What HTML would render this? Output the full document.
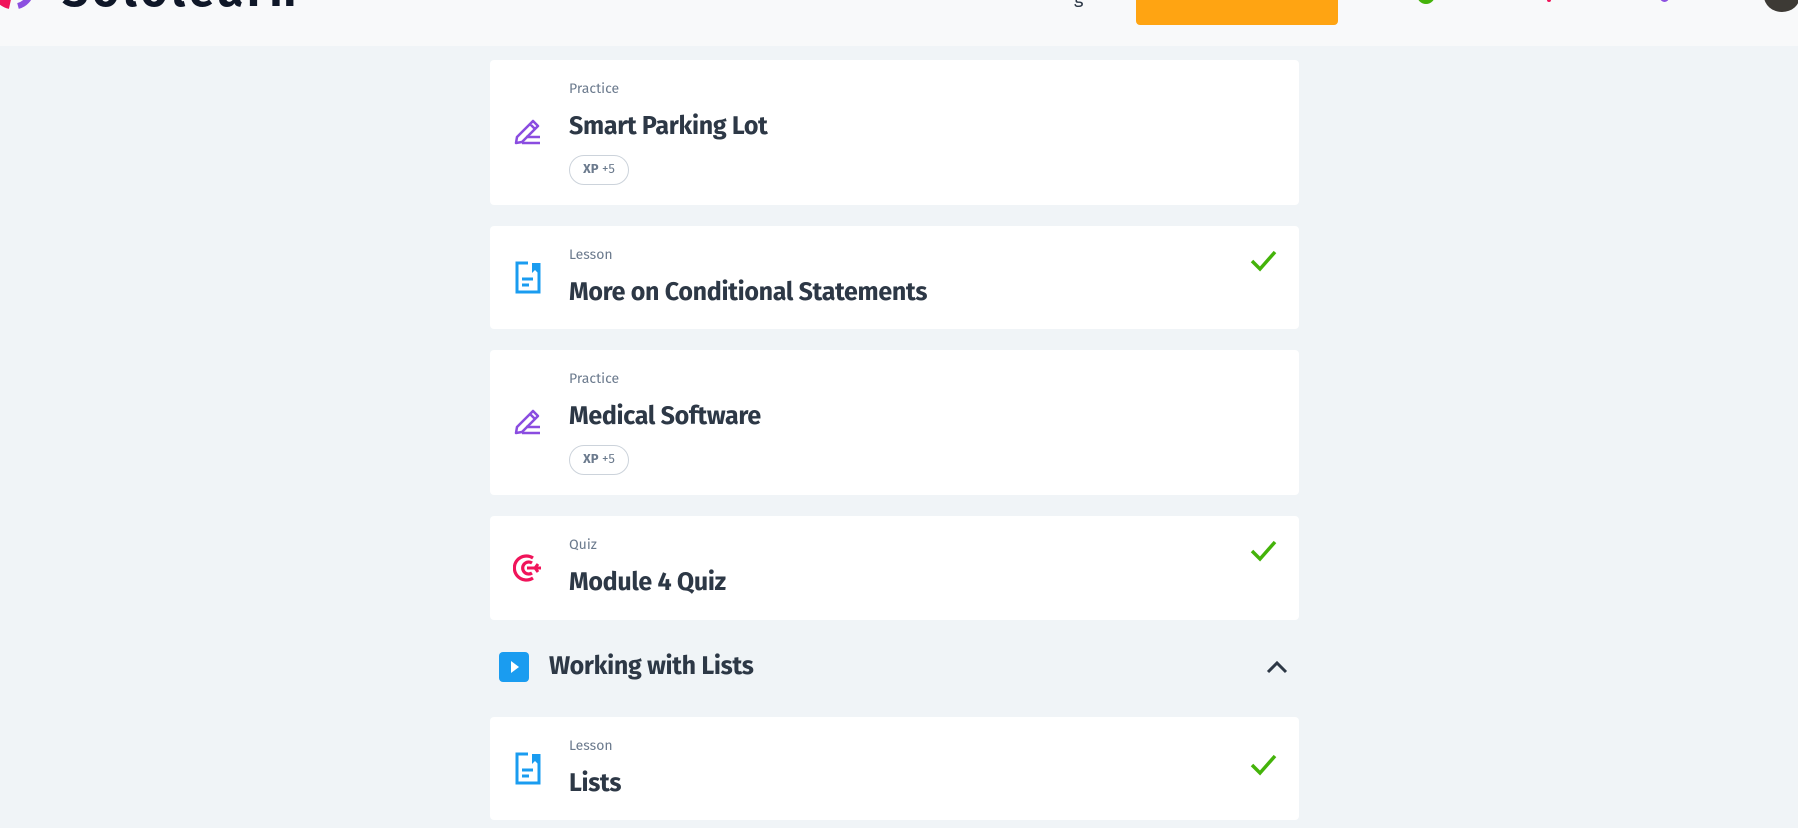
<!DOCTYPE html>
<html><head><meta charset="utf-8"><style>
*{margin:0;padding:0;box-sizing:border-box}
body{width:1798px;height:828px;overflow:hidden;background:#f0f4f7;font-family:"Fira Sans","Liberation Sans",sans-serif;position:relative}
.hdr{position:absolute;left:0;top:0;width:1798px;height:46px;background:#f8f9fa}
.card{position:absolute;left:490px;width:809px;background:#fff;border-radius:4px}
.lbl{position:absolute;left:79px;font-size:14px;color:#6b7a8d}
.ttl{position:absolute;left:79px;font-size:25px;font-weight:bold;color:#2d3846;letter-spacing:-0.3px}
.xp{position:absolute;left:79px;width:60px;height:30px;border:1px solid #ccd3db;border-radius:15px;font-size:13px;color:#6b7a8d;line-height:28px;text-align:center}
.ic{position:absolute;left:23px}
.chk{position:absolute;left:760px}
</style></head><body>
<div class="hdr">
 <svg style="position:absolute;left:-10px;top:-30px" width="60" height="40"><path d="M8 8 A18 18 0 0 0 20 34" stroke="#f0145a" stroke-width="10" fill="none"/><path d="M34 4 A18 18 0 0 1 28 36" stroke="#8c50e0" stroke-width="6" fill="none"/></svg>
 <div style="position:absolute;left:62px;top:-36px;font-size:46px;font-weight:bold;color:#0f1728;letter-spacing:4px">Sololearn</div>
 <div style="position:absolute;left:1074px;top:-14px;font-size:18px;color:#2d3846">g</div>
 <div style="position:absolute;left:1136px;top:-10px;width:202px;height:35px;background:#ffa412;border-radius:4px"></div>
 <div style="position:absolute;left:1417px;top:-8px;width:18px;height:12px;background:#44b30a;border-radius:0 0 9px 9px"></div>
 <div style="position:absolute;left:1547px;top:-4px;width:4px;height:6px;background:#f0145a;border-radius:2px"></div>
 <div style="position:absolute;left:1660px;top:-6px;width:9px;height:8px;background:#8c50e0;border-radius:0 0 5px 5px"></div>
 <div style="position:absolute;left:1764px;top:-20px;width:36px;height:32px;background:#3d3a35;border-radius:50%"></div>
</div>

<div class="card" style="top:60px;height:145px">
 <div class="lbl" style="top:20px">Practice</div>
 <div class="ttl" style="top:51px">Smart Parking Lot</div>
 <div class="xp" style="top:95px"><b>XP</b> +5</div>
 <svg class="ic" style="top:58px" width="30" height="28" viewBox="0 0 30 28"><path d="M3 25 L4 19 L20 3 L25 8 L9 24 Z M17 6 L22 11" stroke="#8a4ce0" stroke-width="2.5" fill="none" stroke-linejoin="round"/><path d="M13 19 H27 M9 25 H27" stroke="#8a4ce0" stroke-width="2.6"/></svg>
</div>
<div class="card" style="top:226px;height:103px">
 <div class="lbl" style="top:20px">Lesson</div>
 <div class="ttl" style="top:51px">More on Conditional Statements</div>
 <svg class="ic" style="top:35px" width="30" height="34" viewBox="0 0 30 34"><path d="M15 2 H4 V31 H26 V2" stroke="#1a9cf0" stroke-width="3" fill="none"/><path d="M19 2 V12 L22 9 L25 12 V2 Z" fill="#1a9cf0"/><path d="M9 18 H20 M9 24 H16" stroke="#1a9cf0" stroke-width="3"/></svg>
 <svg class="chk" style="top:23px" width="28" height="24" viewBox="0 0 28 24"><path d="M2 12 L10 20 L25 3" stroke="#44b30a" stroke-width="3.5" fill="none"/></svg>
</div>
<div class="card" style="top:350px;height:145px">
 <div class="lbl" style="top:20px">Practice</div>
 <div class="ttl" style="top:51px">Medical Software</div>
 <div class="xp" style="top:95px"><b>XP</b> +5</div>
 <svg class="ic" style="top:58px" width="30" height="28" viewBox="0 0 30 28"><path d="M3 25 L4 19 L20 3 L25 8 L9 24 Z M17 6 L22 11" stroke="#8a4ce0" stroke-width="2.5" fill="none" stroke-linejoin="round"/><path d="M13 19 H27 M9 25 H27" stroke="#8a4ce0" stroke-width="2.6"/></svg>
</div>
<div class="card" style="top:516px;height:104px">
 <div class="lbl" style="top:20px">Quiz</div>
 <div class="ttl" style="top:51px">Module 4 Quiz</div>
 <svg class="ic" style="top:37px" width="32" height="30" viewBox="0 0 32 30"><path d="M20 5 A12 12 0 1 0 20 25" stroke="#f0145a" stroke-width="3.2" fill="none"/><path d="M19 10 A6 6 0 1 0 19 20" stroke="#f0145a" stroke-width="3.2" fill="none"/><path d="M14 15 H28 M25 11 L22 15 L25 19" stroke="#f0145a" stroke-width="3" fill="none"/></svg>
 <svg class="chk" style="top:23px" width="28" height="24" viewBox="0 0 28 24"><path d="M2 12 L10 20 L25 3" stroke="#44b30a" stroke-width="3.5" fill="none"/></svg>
</div>
<div style="position:absolute;left:499px;top:652px;width:30px;height:30px;background:#1a9cf0;border-radius:4px"><svg width="30" height="30"><path d="M12 9 L20 15 L12 21 Z" fill="#fff"/></svg></div>
<div style="position:absolute;left:549px;top:651px;font-size:25px;font-weight:bold;color:#2d3846;letter-spacing:-0.3px">Working with Lists</div>
<svg style="position:absolute;left:1264px;top:656px" width="26" height="20"><path d="M4 16 L13 7 L22 16" stroke="#2d3846" stroke-width="3" fill="none"/></svg>
<div class="card" style="top:717px;height:103px">
 <div class="lbl" style="top:20px">Lesson</div>
 <div class="ttl" style="top:51px">Lists</div>
 <svg class="ic" style="top:35px" width="30" height="34" viewBox="0 0 30 34"><path d="M15 2 H4 V31 H26 V2" stroke="#1a9cf0" stroke-width="3" fill="none"/><path d="M19 2 V12 L22 9 L25 12 V2 Z" fill="#1a9cf0"/><path d="M9 18 H20 M9 24 H16" stroke="#1a9cf0" stroke-width="3"/></svg>
 <svg class="chk" style="top:36px" width="28" height="24" viewBox="0 0 28 24"><path d="M2 12 L10 20 L25 3" stroke="#44b30a" stroke-width="3.5" fill="none"/></svg>
</div>
</body></html>
